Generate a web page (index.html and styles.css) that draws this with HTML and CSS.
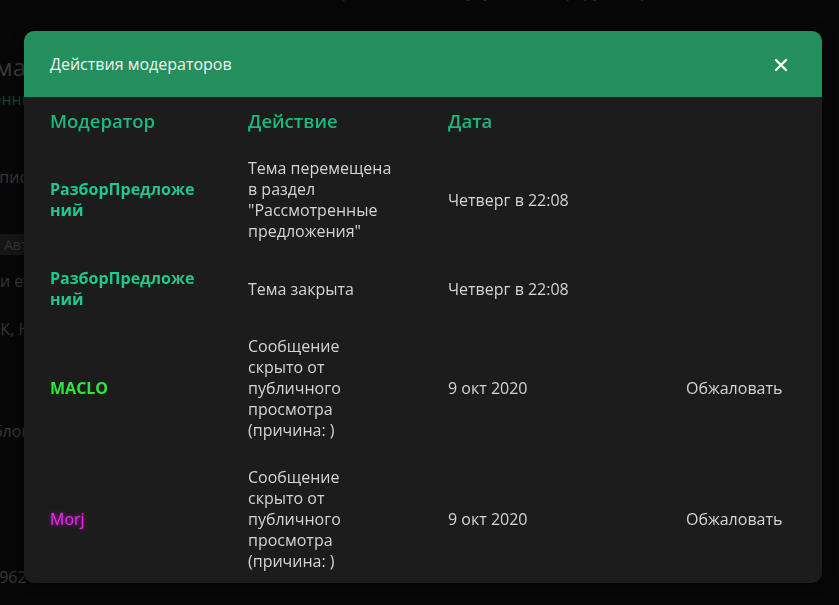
FILE: index.html
```html
<!DOCTYPE html>
<html lang="ru">
<head>
    <meta charset="UTF-8">
    <meta name="viewport" content="width=device-width, initial-scale=1.0">
    <title>Действия модераторов</title>
    <link rel="stylesheet" href="styles.css">
</head>
<body>
    <div class="page">
        <div class="page-top">Предложения по улучшению форума и раздела</div>
        <div class="page-title edge"><span>Тема</span></div>
        <div class="page-status edge"><span>Рассмотренны</span></div>
        <div class="page-line l1 edge"><span>Описа</span></div>
        <div class="page-badge">Автор</div>
        <div class="page-line l2">и ещё</div>
        <div class="page-line l3">ВК, Н</div>
        <div class="page-line l4">блок</div>
        <div class="page-line l5">5962</div>
    </div>

    <div class="overlay">
        <div class="modal">
            <div class="modal-head">
                <span class="modal-title">Действия модераторов</span>
                <span class="modal-close">
                    <svg width="14" height="14" viewBox="0 0 14 14">
                        <path d="M2 2L12 12M12 2L2 12" stroke="#fff" stroke-width="2.4" stroke-linecap="round"/>
                    </svg>
                </span>
            </div>
            <div class="log">
                <div class="log-head">Модератор</div>
                <div class="log-head">Действие</div>
                <div class="log-head">Дата</div>
                <div class="log-head"></div>

                <div class="cell name">РазборПредложений</div>
                <div class="cell">Тема перемещена в раздел "Рассмотренные предложения"</div>
                <div class="cell">Четверг в 22:08</div>
                <div class="cell"></div>

                <div class="cell name">РазборПредложений</div>
                <div class="cell">Тема закрыта</div>
                <div class="cell">Четверг в 22:08</div>
                <div class="cell"></div>

                <div class="cell name maclo">MACLO</div>
                <div class="cell">Сообщение скрыто от публичного просмотра (причина: )</div>
                <div class="cell">9 окт 2020</div>
                <div class="cell">Обжаловать</div>

                <div class="cell name morj">Morj</div>
                <div class="cell">Сообщение скрыто от публичного просмотра (причина: )</div>
                <div class="cell">9 окт 2020</div>
                <div class="cell">Обжаловать</div>
            </div>
        </div>
    </div>
</body>
</html>
```

FILE: styles.css
```css
body {
    margin: 0;
    background: #070707;
    font-family: "Open Sans", "Noto Sans", sans-serif;
    overflow: hidden;
}
.page {
    height: 605px;
    color: #363636;
    font-size: 16px;
    line-height: 20px;
}
.page-top {
    margin: -19px 0 0 330px;
    height: 20px;
    color: #2a2a2a;
    white-space: nowrap;
}
.edge {
    display: flex;
    justify-content: flex-end;
    white-space: nowrap;
}
.page-title {
    margin-top: 50px;
    width: 26px;
    font-size: 24px;
    line-height: 32px;
    color: #3a3a3a;
}
.page-status {
    margin-top: 6px;
    width: 34px;
    color: #17432e;
}
.page-line {
    white-space: nowrap;
}
.l1 {
    margin-top: 58px;
    width: 36px;
}
.page-badge {
    margin: 47px 0 0 -2px;
    padding: 0 6px;
    width: 60px;
    background: #161616;
    color: #333;
    font-size: 14px;
    line-height: 21px;
}
.l2 { margin-top: 16px; }
.l3 { margin: 28px 0 0 -10px; }
.l4 { margin: 82px 0 0 -7px; }
.l5 { margin: 126px 0 0 -10px; }

.overlay {
    position: fixed;
    inset: 0;
    padding: 31px 17px 0 24px;
}
.modal {
    background: #1c1c1c;
    border-radius: 10px;
    overflow: hidden;
    box-shadow: 0 0 12px rgba(0, 0, 0, 0.6);
}
.modal-head {
    background: #238f5d;
    height: 66px;
    padding: 0 34px 0 26px;
    display: flex;
    align-items: center;
    justify-content: space-between;
}
.modal-title {
    color: #f2f2f2;
    font-size: 16px;
}
.modal-close {
    display: flex;
    padding-top: 2px;
}
.log {
    display: grid;
    grid-template-columns: 146px 148px 186px 1fr;
    column-gap: 52px;
    padding: 0 26px 0 26px;
    font-size: 16px;
    line-height: 21px;
    color: #d4d4d4;
}
.log-head {
    color: #19b97c;
    font-size: 18.5px;
    font-weight: 600;
    line-height: 22px;
    padding: 13px 0;
}
.cell {
    padding: 13px 0;
    align-self: center;
}
.log .cell:nth-last-child(-n+4) {
    padding-bottom: 11px;
}
.name {
    font-weight: 700;
    color: #1ec98a;
    word-break: break-all;
}
.maclo {
    color: #2ae83c;
}
.morj {
    font-weight: 400;
    color: #dc2ee0;
    text-shadow: 0 0 5px #9a18a0, 0 0 2px #9a18a0;
}
```
